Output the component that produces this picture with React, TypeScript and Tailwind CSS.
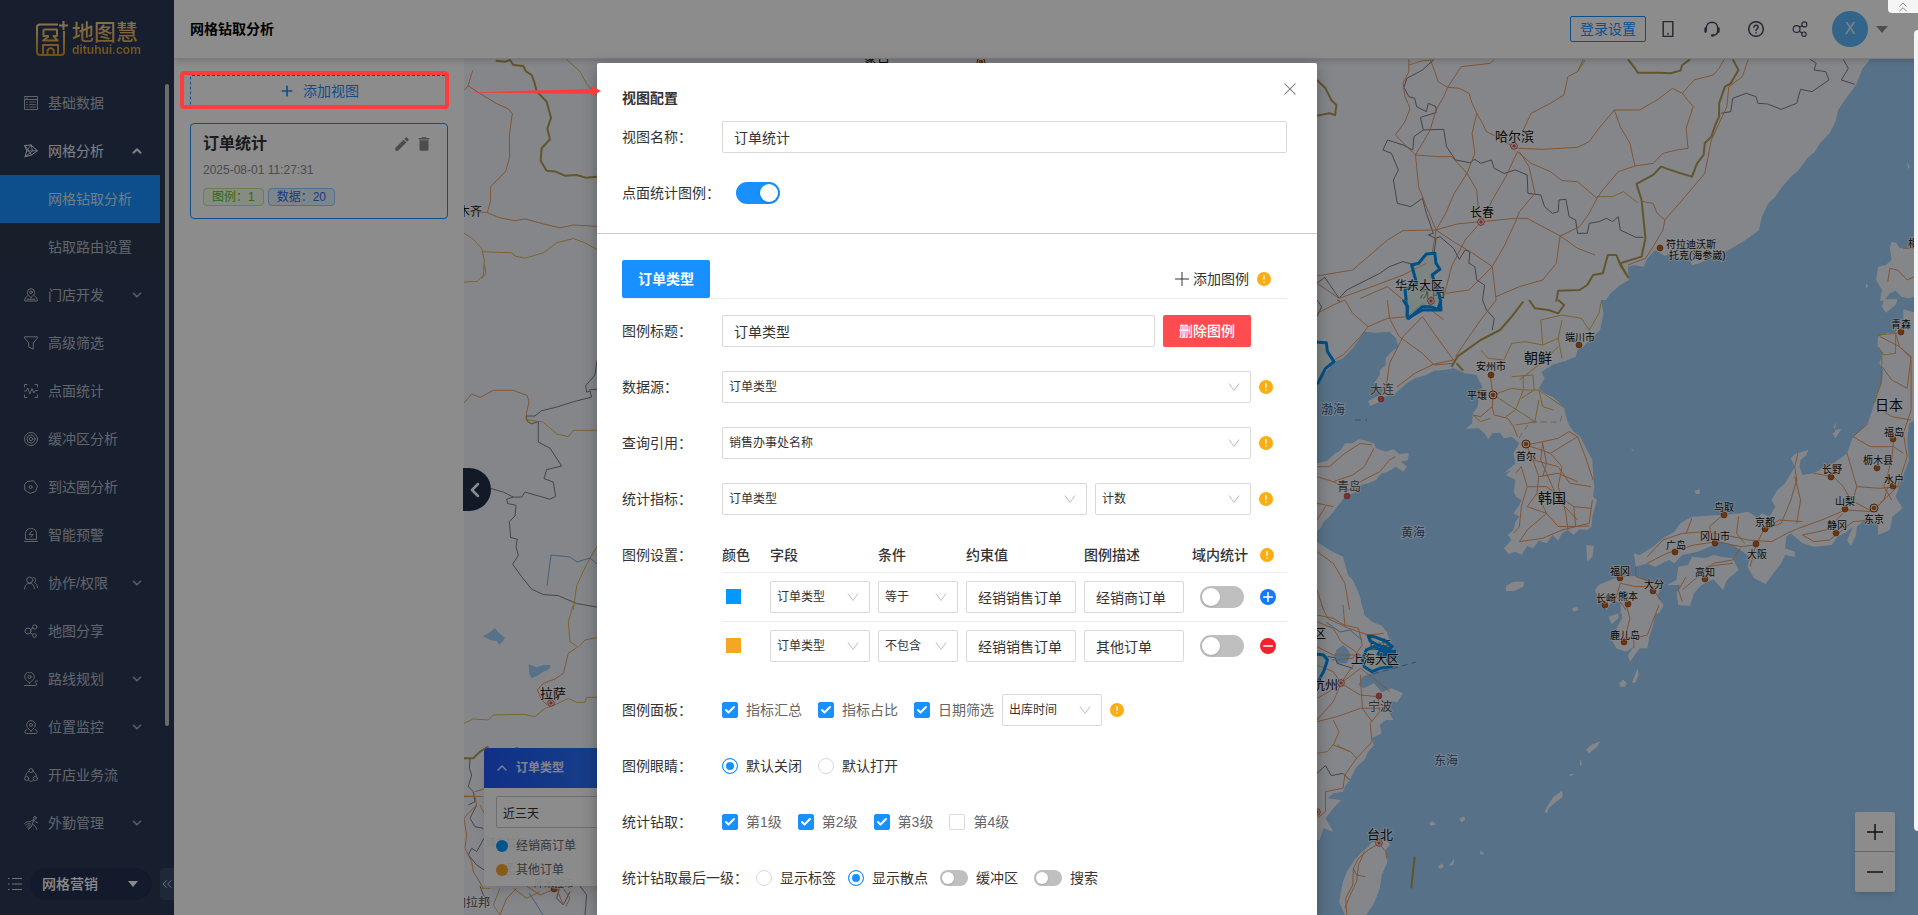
import type { ReactNode } from 'react';
import clsx from 'clsx';
import { Check, ChevronDown, ChevronLeft, ChevronUp, ChevronsLeft, ChevronsUp, Plus } from 'lucide-react';
import { MdDelete, MdEdit } from 'react-icons/md';

/* ---------- icons ---------- */

function Glyph({ children, className = 'size-3.5' }: { children: ReactNode; className?: string }) {
  return (
    <svg
      viewBox="0 0 14 14"
      className={clsx('shrink-0', className)}
      fill="none"
      stroke="currentColor"
      strokeWidth={1}
      strokeLinecap="round"
      strokeLinejoin="round"
      aria-hidden
    >
      {children}
    </svg>
  );
}

const icons: Record<string, ReactNode> = {
  data: (
    <>
      <path d="M.5.5h13v3H.5zM.5 3.5v10h13v-10" />
      <path d="M3 .5v3M2.5 6h1M5.5 6h6M2.5 8.5h1M5.5 8.5h6M2.5 11h1M5.5 11h6" strokeWidth=".8" />
    </>
  ),
  grid: (
    <>
      <path d="M1 1.5 7 1l6.3 5.7L7.5 11 1 12.8 2.7 7z" />
      <path d="M1 1.5 7.5 11M7 1 2.7 7l10.6-.3M7 1l1.5 6-7.5 5.8" strokeWidth=".8" />
    </>
  ),
  store: (
    <>
      <path d="M7 9.5C4.6 7.8 3.4 6.2 3.4 4.3a3.6 3.6 0 0 1 7.2 0c0 1.9-1.2 3.5-3.6 5.2z" />
      <circle cx="7" cy="4.3" r="1.3" />
      <path d="M3.7 7.8C1.7 8.8.7 10.5.7 13h12.6c0-2.5-1-4.2-3-5.2M3 11.2h8" />
    </>
  ),
  filter: <path d="M.8.8h12.4v1.500L9.3 7v6.2L4.7 11V7L.8 2.300z" />,
  stat: (
    <>
      <path d="M.5 3V.5H3M11 .5h2.5V3M13.5 11v2.5H11M3 13.5H.5V11" />
      <path d="M.5 7h1.7l1.5-3 2.2 6L8 4.5l1.7 4.5 1.5-2.5h2.3" />
    </>
  ),
  buffer: (
    <>
      <circle cx="7" cy="7" r="6.5" />
      <circle cx="7" cy="7" r="4" />
      <circle cx="7" cy="7" r="1.7" />
    </>
  ),
  reach: (
    <>
      <path d="M3.5 1.5 9.5.7l4 5.3-2 5.5L6 13.4.8 10 .6 5z" />
      <circle cx="6.6" cy="7" r="1.5" />
    </>
  ),
  alert: (
    <>
      <path d="M1.5 11V5.5a5 5 0 0 1 5-5h1a5 5 0 0 1 5 5V11zM.5 13.5h13" />
      <path d="M7.8 3.3 5 6.6h4L6.500 9.3" />
    </>
  ),
  team: (
    <>
      <circle cx="5.7" cy="4" r="3" />
      <path d="M.6 13c0-3.5 2-5.7 5.1-5.7s4.6 2.2 4.6 5.2M9.3 1.3a2.8 2.8 0 0 1 1 5.2c2 .8 3 2.7 3.2 5" />
    </>
  ),
  share: (
    <>
      <circle cx="4" cy="7" r="3" />
      <circle cx="10.8" cy="3" r="2.2" />
      <circle cx="10.5" cy="11.5" r="1.9" />
      <path d="m6.600 5.5 2.3-1.4M6.4 8.9l2.5 1.6" />
    </>
  ),
  route: (
    <>
      <path d="M5.5 11C2.3 8.5.7 6.7.7 4.900a4.6 4.6 0 0 1 9.6 0c0 1.8-1.5 3.6-4.8 6.1z" />
      <circle cx="5.5" cy="4.9" r="1.6" />
      <path d="M.5 13.5h10.7c2 0 2-2.2.5-2.6-1.5-.5-.7-2.3 1.8-2" />
    </>
  ),
  monitor: (
    <>
      <path d="M7 11C4 8.5 2.7 6.7 2.7 4.9a4.3 4.3 0 0 1 8.6 0c0 1.8-1.3 3.6-4.3 6.1z" />
      <circle cx="7" cy="4.9" r="1.5" />
      <path d="M3 9.5c-3 1-3.2 4 0 4h8c3.2 0 3-3 0-4" />
    </>
  ),
  flow: (
    <>
      <circle cx="7" cy="2.5" r="2" />
      <circle cx="2.7" cy="10.5" r="2.1" />
      <circle cx="11.3" cy="10.5" r="2.1" />
      <path d="M4.8 3.5C2.8 4.6 1.8 6 1.7 8M9.2 3.5c2 1.1 3 2.500 3.1 4.5M5 12.8c1.3.7 2.7.7 4 0" />
    </>
  ),
  field: (
    <>
      <circle cx="11" cy="1.8" r="1.3" />
      <path d="M6.5 5.5 9.5 3.5l2 2.5 2 .8M9.5 4 8.5 8l3 2.5 1.3 3M8.5 8 7 11l-2.5 2.3" />
      <path d="M.5 7.5C2 5.8 4 5.3 6 6M1.8 9C3 7.8 4.5 7.3 6.5 8M3 10.7c1-.9 2-1 3.2-.7M4.200 12.200l1.300-.4" />
    </>
  ),
};

function WarnIcon() {
  return (
    <svg viewBox="0 0 14 14" className="size-3.5 shrink-0" aria-label="提示">
      <circle cx="7" cy="7" r="7" fill="#faad14" />
      <path d="M7 3.3v4.5M7 9.5v1.2" stroke="#fff" strokeWidth="1.3" />
    </svg>
  );
}

function Logo() {
  return (
    <div className="flex items-end gap-1 bg-linear-to-b from-[#f3cf8a] to-[#dc9320] bg-clip-text pl-9 text-transparent">
      <svg viewBox="0 0 32 35" className="h-[35px] w-8" fill="none" stroke="url(#gold)" strokeWidth="2" strokeLinejoin="round">
        <defs>
          <linearGradient id="gold" x1="0" y1="0" x2="0" y2="35" gradientUnits="userSpaceOnUse">
            <stop stopColor="#f5d8a0" />
            <stop offset="1" stopColor="#d98c14" />
          </linearGradient>
        </defs>
        <path d="M22 3.5H4a3 3 0 0 0-3 3V31a3 3 0 0 0 3 3h21a3 3 0 0 0 3-3V10" />
        <path d="M27.5 0v9M23 4.5h9" />
        <path d="M7.500 8.500H21v6.500h-3.500l4 4.500h1M7.500 8.500V15H12v1l-5 3.500h15.500" />
        <path d="M7 33.500V24h15v9.500M11.500 33.5v-3a3.200 3.200 0 0 1 6.400 0v3" />
      </svg>
      <div className="flex flex-col">
        <span className="text-[22px] leading-[22px] font-medium">地图慧</span>
        <span className="font-['Inter',sans-serif] text-xs leading-3 font-semibold">dituhui.com</span>
      </div>
    </div>
  );
}

/* ---------- sidebar ---------- */

type NavItem = { icon?: string; label: string; arrow?: 'up' | 'down'; kind?: 'active' | 'sub' | 'open' };

const navItems: NavItem[] = [
  { icon: 'data', label: '基础数据' },
  { icon: 'grid', label: '网格分析', arrow: 'up', kind: 'open' },
  { label: '网格钻取分析', kind: 'active' },
  { label: '钻取路由设置', kind: 'sub' },
  { icon: 'store', label: '门店开发', arrow: 'down' },
  { icon: 'filter', label: '高级筛选' },
  { icon: 'stat', label: '点面统计' },
  { icon: 'buffer', label: '缓冲区分析' },
  { icon: 'reach', label: '到达圈分析' },
  { icon: 'alert', label: '智能预警' },
  { icon: 'team', label: '协作/权限', arrow: 'down' },
  { icon: 'share', label: '地图分享' },
  { icon: 'route', label: '路线规划', arrow: 'down' },
  { icon: 'monitor', label: '位置监控', arrow: 'down' },
  { icon: 'flow', label: '开店业务流' },
  { icon: 'field', label: '外勤管理', arrow: 'down' },
];

function Sidebar() {
  return (
    <aside className="flex w-[174px] shrink-0 flex-col bg-[#2b3a57] text-sm text-[#b4b8c1]">
      <div className="h-[79px] shrink-0 pt-[21px]">
        <Logo />
      </div>
      <div className="flex min-h-0 flex-1">
        <nav className="w-40 shrink-0">
          {navItems.map((item) => (
            <a
              key={item.label}
              href="#"
              className={clsx(
                'flex h-12 items-center pr-4 pl-6',
                item.kind === 'active' && 'bg-[#1890ff] text-[#cfe3f8]',
                item.kind === 'sub' && 'bg-[#2a3a4d]',
                item.kind === 'open' && 'text-[#e8eaee]',
              )}
            >
              {item.icon && <Glyph>{icons[item.icon]}</Glyph>}
              <span className={clsx('flex-1', item.icon ? 'ml-2.5' : 'ml-6')}>{item.label}</span>
              {item.arrow === 'up' && <ChevronUp className="size-3.5" strokeWidth={3.5} />}
              {item.arrow === 'down' && <ChevronDown className="size-3.5 text-[#9ea4b0]" strokeWidth={3} />}
            </a>
          ))}
        </nav>
        <div className="mt-[5px] ml-[5px] h-[642px] w-1 shrink-0 rounded-full bg-[#c6c6c6]" />
      </div>
      <div className="flex h-12 shrink-0 items-center justify-between pl-2 text-white">
        <button type="button" aria-label="菜单" className="text-[#d0d3d9]">
          <Glyph className="size-3.5">
            <path d="M0 1.5h1.5M4 1.5h10M0 7h1.500M4 7h10M0 12.5h1.5M4 12.5h10" strokeLinecap="butt" />
          </Glyph>
        </button>
        <button
          type="button"
          className="flex h-8 w-[122px] items-center justify-between rounded-full bg-[#223050] pr-3.5 pl-3 font-medium"
        >
          网格营销
          <svg viewBox="0 0 10 6" className="h-1.5 w-2.5" fill="#fff" aria-hidden>
            <path d="M0 0h10L5 6z" />
          </svg>
        </button>
        <button
          type="button"
          aria-label="收起菜单"
          className="flex h-8 w-3.5 items-center justify-center rounded-l-sm bg-[#3a4968] text-[#d0d3d9]"
        >
          <ChevronsLeft className="size-4 shrink-0" strokeWidth={1.5} />
        </button>
      </div>
      <div className="h-[7px] shrink-0" />
    </aside>
  );
}

/* ---------- header ---------- */

function Header() {
  return (
    <header className="z-10 flex h-[59px] shrink-0 items-start justify-between border-b border-[#e0e0e4] bg-white pl-4 shadow-md">
      <h1 className="text-sm leading-[58px] font-bold text-black">网格钻取分析</h1>
      <div className="flex h-[58px] items-center pr-[30px] text-[#4a4a63]">
        <button type="button" className="h-[26px] w-[76px] rounded-xs border border-[#1890ff] text-sm leading-6 text-[#1890ff]">
          登录设置
        </button>
        <button type="button" aria-label="手机版" className="ml-3.5">
          <Glyph className="size-4">
            <path d="M2.800.500h8.400v13H2.800zM7 11v.5" strokeWidth="1.3" />
          </Glyph>
        </button>
        <button type="button" aria-label="客服" className="ml-7">
          <Glyph className="size-4">
            <path d="M2 8.5V6a5 5 0 0 1 10 0v2.5c0 2-1.5 3.7-4 4" strokeWidth="1.3" />
            <path d="M1.3 6.5v3M12.7 6.5v3M7 12.7h1" strokeWidth="2" />
          </Glyph>
        </button>
        <button type="button" aria-label="帮助" className="ml-7">
          <Glyph className="size-4">
            <circle cx="7" cy="7" r="6.4" strokeWidth="1.3" />
            <path d="M5.2 5.5c0-2.5 3.7-2.3 3.7 0 0 1.3-1.9 1.5-1.9 2.8M7 10.3v.2" strokeWidth="1.3" />
          </Glyph>
        </button>
        <button type="button" aria-label="分享" className="ml-7">
          <Glyph className="size-4">{icons.share}</Glyph>
        </button>
        <button type="button" className="ml-6 size-9 rounded-full bg-[#5db6f9] text-base text-[#e6f4ff]">
          X
        </button>
        <svg viewBox="0 0 10 6" className="ml-2 h-[7px] w-3" fill="#8a8a90" aria-hidden>
          <path d="M0 0h10L5 6z" />
        </svg>
      </div>
    </header>
  );
}

/* ---------- view list ---------- */

function ViewList() {
  return (
    <section className="flex w-[290px] shrink-0 flex-col gap-4 bg-white px-4 pt-4">
      <button
        type="button"
        className="flex h-8 items-center justify-center gap-2 rounded-xs border border-dashed border-[#1890ff] text-sm text-[#1890ff]"
      >
        <Plus className="size-4" strokeWidth={2.5} />
        添加视图
      </button>
      <article className="flex h-24 flex-col rounded border border-[#1890ff] px-3 pt-2">
        <div className="flex items-center justify-between pr-0.5">
          <h2 className="text-base leading-6 font-bold text-[#333]">订单统计</h2>
          <div className="flex gap-1 text-[#8a8a8a]">
            <button type="button" aria-label="编辑">
              <MdEdit className="size-[18px]" />
            </button>
            <button type="button" aria-label="删除">
              <MdDelete className="size-[18px]" />
            </button>
          </div>
        </div>
        <time className="mt-1 text-xs leading-5 text-[#8a8a8a]">2025-08-01 11:27:31</time>
        <div className="mt-2 flex gap-1 text-xs leading-4">
          <span className="rounded-sm border border-[#b7eb8f] bg-[#f6ffed] px-2 text-[#52c41a]">图例：1</span>
          <span className="rounded-sm border border-[#91caff] bg-[#e6f4ff] px-2 text-[#2f6bea]">数据：20</span>
        </div>
      </article>
    </section>
  );
}

/* ---------- map ---------- */

// Each sheet is drawn in its own grid and scaled onto the canvas.
const sheets = {
  ne: 'translate(1310 0) scale(.3878 .3333)',
  e: 'translate(1310 300) scale(.3878 .3333)',
  se: 'translate(1310 605) scale(.3878 .3333)',
  w: 'translate(440 50) scale(.3333 .3571)',
  sw: 'translate(460 605) scale(.3333)',
};

type Sheet = keyof typeof sheets;
type Layer = { sheet: Sheet; d: string };

const sea: Layer[] = [
  {
    sheet: 'ne',
    d: 'M1445 177 1425 205 1408 255 1385 290 1362 330 1355 365 1340 400 1315 430 1302 455 1282 475 1260 510 1240 530 1218 560 1200 590 1182 610 1165 650 1158 690 1135 710 1118 724 1080 750 1040 770 1000 792 985 795 975 765 960 775 945 778 930 760 915 768 890 750 870 775 860 800 835 795 820 800 822 840 800 855 775 880 762 902H1580V177Z',
  },
  { sheet: 'e', d: 'M-20 0H1580V930H-20Z' },
  { sheet: 'se', d: 'M-20 0H1580V940H-20Z' },
  { sheet: 'sw', d: 'M68 93 85 85 98 75 105 68 113 80 135 98 128 110 118 119 110 108 90 105ZM206 178 230 187 250 180 272 180 268 192 250 200 232 212 215 220 208 208Z' },
];

const land: Layer[] = [
  {
    sheet: 'e',
    d: 'M-20 -2H750L757 40 748 90 735 105 720 120 705 140 690 150 685 170 660 182 650 185 625 195 597 215 605 235 590 265 605 280 625 290 640 305 655 322 660 350 668 375 680 395 697 410 710 440 728 480 730 520 733 560 730 590 740 600 728 650 726 680 715 690 695 688 680 705 665 690 650 700 640 722 625 705 610 730 590 722 575 745 560 738 545 765 530 755 512 762 500 745 520 720 510 705 525 690 530 665 540 650 525 640 540 615 545 600 532 590 525 575 530 540 505 525 520 510 500 520 530 490 525 460 540 430 520 410 500 415 490 398 470 400 460 418 450 400 435 385 402 386 418 370 420 340 432 322 435 300 432 280 445 262 435 240 430 225 400 220 370 205 345 210 320 212 300 225 270 235 250 250 235 265 215 285 190 290 180 305 155 318 150 303 180 285 190 270 165 250 180 225 180 210 195 195 195 175 210 155 228 140 222 115 205 95 170 98 140 95 125 120 110 145 85 175 62 185 42 215 18 250-20 260Z',
  },
  {
    sheet: 'e',
    d: 'M-20 490H20L45 482 60 465 80 450 90 430 110 430 125 418 145 422 165 430 170 445 195 455 215 448 230 462 255 460 252 480 235 485 250 500 240 515 222 500 200 515 185 520 170 540 150 550 130 555 118 575 90 590 80 605 50 650 35 665 30 680 18 695-20 700Z',
  },
  { sheet: 'e', d: 'M-20 720 18 725 50 750 85 770 92 800 98 825 110 840 122 870 130 895 135 930H-20Z' },
  {
    sheet: 'se',
    d: 'M-20-2H132L138 15 140 30 160 50 185 62 198 80 205 105 222 150 205 190 165 200 135 215 125 240 145 245 165 235 185 262 210 250 240 265 225 292 195 285 210 300 205 325 215 345 195 345 180 360 185 385 160 400 165 420 150 440 140 465 120 485 105 520 90 545 85 560 60 565 45 580 80 585 60 610 40 640 60 680 35 670 25 705-20 710Z',
  },
  {
    sheet: 'se',
    d: 'M150 725 160 712 195 705 207 718 195 735 200 770 185 810 180 850 165 895 145 930 90 930 75 890 85 830 95 800 115 765 130 745Z',
  },
  {
    sheet: 'e',
    d: 'M1580 45 1530 60 1515 80 1510 100 1490 98 1465 110 1463 140 1478 160 1468 190 1478 210 1475 250 1460 290 1450 330 1440 365 1425 385 1400 410 1385 460 1350 490 1320 505 1300 520 1270 525 1262 500 1265 480 1280 465 1285 450 1250 462 1240 475 1250 500 1235 530 1225 550 1205 570 1190 600 1200 620 1185 650 1165 640 1155 655 1130 635 1110 640 1060 645 985 650 955 670 940 695 910 715 885 740 850 765 835 760 840 800 870 790 890 800 925 780 940 790 960 765 1000 755 1030 740 1060 725 1090 735 1110 750 1135 770 1128 800 1145 835 1175 852 1195 820 1215 790 1225 765 1250 770 1250 755 1225 745 1228 710 1240 700 1270 730 1300 740 1345 735 1360 710 1385 695 1400 680 1385 720 1395 738 1408 705 1410 680 1430 660 1440 650 1465 670 1465 705 1495 690 1502 650 1528 625 1510 590 1525 540 1545 480 1540 420 1545 370 1580 350Z',
  },
  { sheet: 'e', d: 'M950 800 975 795 985 770 1020 775 1040 765 1060 770 1090 775 1105 810 1075 840 1065 870 1040 838 1010 855 990 880 980 918 950 915 945 880 955 855 920 855 945 840Z' },
  { sheet: 'e', d: 'M745 855 775 840 800 830 840 828 870 845 905 860 895 890 912 915 900 940H800L805 910 780 900 765 930 745 900 735 870Z' },
  { sheet: 'se', d: 'M800-2H905L890 30 885 60 875 95 870 130 850 130 825 170 820 150 835 125 815 140 790 130 778 105 800 95 790 70 805 40Z' },
  { sheet: 'e', d: 'M1475 20 1480-2H1515L1510 15 1485 38ZM1530 28 1580 45V70L1530 60Z' },
  {
    sheet: 'ne',
    d: 'M1500 725 1512 728 1520 745 1580 740V880L1545 895 1525 890 1510 872 1495 880 1480 902H1470L1475 870 1460 840 1465 800 1485 795 1500 780 1495 745ZM1540 485 1546 500 1542 508ZM1435 850 1440 860 1432 865Z',
  },
  { sheet: 'e', d: 'M505 858 525 845 552 845 550 860 525 874 505 872ZM712 735 732 738 728 770 715 785ZM992 572 1005 568 1005 582 995 582ZM1357 367 1352 390 1370 388 1355 415 1347 400 1355 395 1350 380ZM830 447 834 452 829 452Z' },
  {
    sheet: 'se',
    d: 'M797 235 808 224 817 235 812 245H800ZM845 190 847 210 838 235 830 232 838 210ZM712 435 725 420 750 408 740 425 720 445ZM696 462 702 478 696 484ZM650 557 652 575 635 590 615 610 612 625 605 620 615 598 628 575ZM668 508 682 506 672 514ZM385 640 398 635 400 645 390 652ZM307 655 315 648 325 658 312 662ZM330 785 340 775 345 785 335 792ZM372 762 370 780 358 782ZM440 735 450 748 438 748ZM675 10 690 5 692 15 680 20ZM770 35 795 25 795 40 778 58Z',
  },
];

const lakes: Layer[] = [
  { sheet: 'se', d: 'M68 135 85 120 95 130 105 150 95 175 70 175 62 155ZM125 240 145 222 165 232 140 250Z' },
];

const highways: Layer[] = [
  { sheet: 'ne', d: 'M310 178 322 215 330 245 355 262 345 290 325 330 310 390 290 430 272 465' },
  { sheet: 'ne', d: 'M475 178 465 190 390 200 355 262 385 265 410 280 418 310 430 340 445 370 455 395 478 408 500 425 535 445' },
  { sheet: 'ne', d: 'M430 340 418 400 425 460 405 520 372 580 350 640 325 690' },
  { sheet: 'ne', d: 'M255 178 255 215 240 250 245 290 258 325 245 365 220 405 250 440 272 465 275 500 280 560 300 620 325 690' },
  { sheet: 'ne', d: 'M272 465 330 470 365 470 405 520 430 570 435 640 442 665' },
  { sheet: 'ne', d: 'M535 445 600 448 690 442 720 425 745 385 785 330 850 330 895 300 935 265 960 280 990 240 1040 225 1055 205 1068 178' },
  { sheet: 'ne', d: 'M785 330 800 380 825 430 838 498 795 515 755 570 740 595 720 640 695 680 645 708 560 655 530 655 442 665' },
  { sheet: 'ne', d: 'M838 498 885 490 910 460 945 450 975 445 970 385 988 320 960 280' },
  { sheet: 'ne', d: 'M535 455 570 490 620 515 650 542 690 545 740 595M535 455 505 530 470 600 442 665M540 455 565 500 580 580 540 635 530 665 500 740 470 800' },
  { sheet: 'ne', d: 'M550 390 570 340 620 310 655 285 665 230 690 215 705 178' },
  { sheet: 'ne', d: 'M325 690 380 672 442 665 400 720 365 800 345 890M325 690 240 692 200 720 150 770 110 810 18 828M325 690 370 725 420 760 470 800 480 900' },
  { sheet: 'ne', d: 'M645 708 690 745 735 765M645 708 635 790 600 840 540 860 480 890M325 690 315 760' },
  { sheet: 'ne', d: 'M1130 178 1115 230 1080 260 1075 320 1035 420 1018 520 960 600 915 660 910 690 885 740 865 775 820 795M858 605 885 610 895 640 915 660' },
  { sheet: 'ne', d: 'M18 850 75 895 160 860 240 825 300 790M240 900 200 860 130 895M350 880 410 870 470 800' },
  { sheet: 'ne', d: 'M1558 745 1530 745M1558 830 1540 840 1515 810 1495 805 1490 845' },
  { sheet: 'e', d: 'M18 40 60 15 90 0 110 40 150 80 130 110 85 165 65 178M150 80 200 55 250 50 290 10 345 60M200 0 205 55 230 110 290 160 320 195 370 190M290 50 240 110 205 190 198 250 195 285' },
  { sheet: 'e', d: 'M290 50 320 100 370 180 320 192 270 220 225 260M480 0 440 60 410 110 375 170' },
  { sheet: 'e', d: 'M18 500 50 500 90 460 130 430 160 435M18 530 60 545 110 525 140 500 165 445M60 545 100 570 130 545 180 515 205 480 220 470M18 610 60 620M18 660 40 620' },
  { sheet: 'e', d: 'M465 230 472 285 470 320 475 345 510 355 525 380 535 410M470 320 440 350 420 345' },
  { sheet: 'e', d: 'M558 435 600 425 640 415 668 395 690 410M558 435 575 480 590 530 585 580 610 640 640 680 720 678M558 435 620 460 690 410M575 480 640 500 670 550 725 560M590 530 640 520 690 545M545 500 560 560 545 620 540 680 525 700M545 500 530 520M560 560 610 560 680 620 725 625M600 425 595 480 640 600 690 660M620 460 650 500 640 560 660 640 665 690M585 580 560 620 610 640 560 690 540 725 600 715 650 690 720 670 728 600M690 410 710 470 730 540M680 620 685 680M600 430 610 490 600 530' },
  { sheet: 'e', d: 'M18 755 60 790 90 850 102 930M18 870 35 930' },
  { sheet: 'e', d: 'M870 770 910 720 960 700 1020 695 1070 705 1130 720 1190 725 1230 700 1260 685 1320 660 1380 630 1450 635 1480 600 1490 560M870 790 920 760 990 735 1050 725 1110 740 1150 735M985 655 970 700M1060 650 1030 680 1040 730M1105 650 1100 700 1120 730M1150 735 1170 690 1210 660 1270 665M1150 735 1135 800M1170 690 1215 670 1240 600 1255 540 1250 500 1258 460' },
  { sheet: 'e', d: 'M1300 520 1350 530 1375 560 1395 600 1450 635M1385 460 1395 500 1410 560 1400 600M1400 410 1445 440 1505 440 1530 460M1410 560 1470 565 1520 560M1375 640 1330 690 1270 705 1300 725 1340 720 1400 665 1450 660M1505 420 1500 480 1480 560 1500 600M1475 200 1500 240 1540 265 1550 170 1520 140 1470 110M1510 100 1520 140 1550 175M1460 320 1500 350 1550 360M1550 180 1550 330 1530 400 1540 470 1515 560 1470 610M1440 370 1400 410M1250 530 1265 600 1255 670' },
  { sheet: 'e', d: 'M800 850 840 860 900 860M800 850 790 890 815 930M840 800 840 830 890 850M960 870 1000 830 1040 790 1090 780 1110 745M1020 800 1090 790M960 905 950 870 970 830M885 870 905 900' },
  { sheet: 'se', d: 'M815 0 825 40 810 110M900 0 885 45 870 90 835 100 835 130' },
  { sheet: 'se', d: 'M30 0 45 40 100 70 150 90 190 85M18 50 60 70 80 110 130 150 100 200 80 235 60 290 18 345M85 0 90 60 125 70 135 120 110 160 55 165M80 235 130 190 175 230 205 260M18 125 60 150 130 150M80 235 130 270 175 275 180 320 155 355 160 410 120 460 90 510 85 550 40 560 40 620 18 640M130 210 135 310 160 350M18 350 70 335 130 310 180 310M60 345 75 380 60 420 105 440 120 460M18 280 80 240M18 180 60 200 80 235M18 30 60 40 90 62' },
  { sheet: 'se', d: 'M178 715 150 735 125 760 112 790 110 840 92 880 95 930M178 715 195 740 198 760M112 790 120 810 142 815M140 740 125 780 120 830 100 880 90 910' },
  { sheet: 'w', d: 'M98 57 92 75 84 100 72 113M84 100 120 122 170 150 205 165 217 178 208 240 209 300 197 340 152 383 151 425 142 455M72 452 140 455 180 470 225 478 255 473 310 487 360 498 400 490 471 494' },
  { sheet: 'w', d: 'M72 987 85 975 95 963 120 973 160 953 220 953 262 968 267 985 260 1015 258 1035' },
  { sheet: 'sw', d: 'M232 255 250 235 285 222 310 205 325 145 350 128M232 255 245 285 262 300' },
  { sheet: 'sw', d: 'M12 575 45 575 50 600 25 625 12 640 20 690 15 730 35 770 40 800 70 850M45 560 72 552M200 843 240 870 290 850 310 900M310 850 330 880 318 905M120 930 140 880 170 850' },
];

const roads: Layer[] = [
  { sheet: 'ne', d: 'M740 590 780 590 808 575 845 608M255 195 290 182 320 180M690 215 710 180' },
  { sheet: 'e', d: 'M440 150 460 175 500 180 520 130 555 125 600 135 595 60 650 45 700 55 720 90 745 40 752 0M600 135 640 115 650 60M640 115 650 175M472 285 520 265 550 270 590 270 620 295 655 322M550 225 550 270 530 330 505 350M520 230 575 225 578 270 545 295M480 290 520 320 580 365 590 300M590 270 600 320 628 330M540 240 595 190 640 140M420 345 440 365 465 355' },
  { sheet: 'e', d: 'M1463 105 1515 100M1465 140 1480 165 1510 160 1510 105M1475 170 1472 250 1455 310M530 375 585 365' },
  { sheet: 'se', d: 'M18 445 45 440 60 418M100 440 70 420' },
  { sheet: 'w', d: 'M378 25 420 60 440 95 471 128M72 513 100 530 125 555 133 590 130 630 112 648 72 650M130 565 215 568 225 577 255 583 310 568 350 540 400 528 435 540 471 558M133 600 138 625 125 640' },
  { sheet: 'w', d: 'M258 1035 310 1042 350 1075 385 1083 400 1065 471 1065M471 1390 440 1440 410 1500 400 1568' },
  { sheet: 'sw', d: 'M340 0 325 50 330 110 355 127 375 105 411 98M12 355 40 342 85 345 100 330 190 328 225 335 255 310 290 297 325 280 350 292 375 292 380 277 411 277' },
  { sheet: 'sw', d: 'M12 573 70 575M60 600 80 640M120 850 100 900 120 930M160 850 200 880 240 860M60 850 90 850' },
];

const provinces: Layer[] = [
  {
    sheet: 'ne',
    d: 'M320 178 290 210 250 235 242 262 255 290 270 295 275 320 300 335 305 310 325 320 325 338 285 352 292 390 345 388 352 440 375 480 412 488 425 478 440 490 468 480 475 505 500 520 530 510 560 525 562 580 595 585 605 620 625 640 640 635 642 600 660 598 668 650 685 660 690 700 715 700 720 670 745 665 765 655 780 665 795 650 800 690 840 712 860 712',
  },
  { sheet: 'ne', d: 'M292 390 268 410 265 450 240 435 200 420 188 450 210 460 228 510 215 540 225 610 260 620 290 595 300 640 318 700 305 705 325 715 335 710 370 745 385 778 400 750 412 755 410 790 425 800 430 840 450 855 445 900M18 850 38 832 75 895 95 870 180 820 205 800 240 785 270 795M325 715 320 760' },
  { sheet: 'ne', d: 'M1060 340 1085 335 1090 295 1125 280 1150 290 1155 310 1180 312 1215 328 1255 310 1265 268 1295 275 1338 240 1330 215 1300 210 1305 190 1290 178M1375 178 1388 205 1370 240 1405 253' },
  { sheet: 'e', d: 'M445 0 455 30 475 55 470 90M18 50 30 20 18 0M70 0 78 5' },
  { sheet: 'se', d: 'M18 505 40 482 55 512 85 505 102 525M45 155 65 158 70 175 110 190' },
  { sheet: 'w', d: 'M471 870 465 910 437 940 440 958 450 955 455 972 400 985 350 1000 305 1010 285 1025 258 1025 262 1040 275 1047 295 1040 295 1098 330 1115 365 1165 320 1175 312 1200 340 1210 347 1250 330 1258 255 1238 245 1252 220 1252 190 1238 153 1228M471 950 448 952' },
  { sheet: 'w', d: 'M220 1252 200 1258 203 1270 228 1275 225 1305 208 1320 212 1365 232 1370 228 1390 235 1415 218 1440 245 1475 275 1510 310 1525 355 1528 410 1550 471 1560' },
  { sheet: 'sw', d: 'M30 460 28 490 35 510 25 545 40 560 45 590 25 600M50 600 30 640 45 665 70 670M72 700 50 740 35 730 25 750 50 780 80 800M60 843 70 870 90 890M360 843 380 870 375 930M300 843 290 880 310 900 330 860' },
];

const borders: Layer[] = [
  { sheet: 'ne', d: 'M18 240 40 265 55 300 68 315 65 345 50 340 18 347M820 178 838 205 845 218 900 218 930 220 955 212 960 195 980 178M1090 178 1105 210 1085 250 1070 260 1055 310 1055 350 1045 375 1035 410 1018 430 1015 465 998 490 985 530 950 518 905 500 885 525 842 552 855 600 862 680 865 715 855 770 800 790 820 832 800 795 790 765 768 765 755 820 730 825 715 855 695 870 640 872 635 905' },
  { sheet: 'e', d: 'M365 200 380 170 440 120 490 90 520 50 550 5M565 0 580 25 615 30 640 40 655 15 640 0M378 190 395 212' },
  { sheet: 'se', d: 'M270 755 261 850' },
  { sheet: 'w', d: 'M167 30 195 33 210 28 220 42 250 45 258 60 275 70 283 90 290 115 320 145 333 190 322 220 330 250 305 275 302 310 320 338 345 340 375 352 410 350 440 358 471 355' },
  { sheet: 'sw', d: 'M12 460 40 460 60 440 85 425M165 430 175 430' },
];

const regions: Layer[] = [
  { sheet: 'ne', d: 'M300 762 322 760 325 790 335 808 315 825 322 850 335 890 338 930H290L252 955 250 920 245 870 275 850 262 795 280 790Z' },
  { sheet: 'e', d: 'M240 0 252 20 250 45 255 55 290 20 310 20 330 28 338 0' },
  { sheet: 'e', d: 'M0 125 42 128 45 155 62 185 40 205 20 250 0 250Z' },
  { sheet: 'se', d: 'M150 92 165 95 195 108 212 125 205 132 175 120 155 108ZM145 135 165 125 190 140 215 145 200 165 210 185 180 190 160 200 140 185 135 165ZM0 145 35 150 45 165 35 200 20 230 0 230Z' },
];

function Paths({ layers, className }: { layers: Layer[]; className: string }) {
  return (
    <g className={className} strokeLinejoin="round">
      {layers.map((layer) => (
        <path key={layer.sheet + layer.d} d={layer.d} transform={sheets[layer.sheet]} vectorEffect="non-scaling-stroke" />
      ))}
    </g>
  );
}

type Place = [text: string, x: number, y: number, size: number, tone?: 'sea' | 'soft'];

// Labels that sit under the highlighted regions.
const coveredPlaces: Place[] = [
  ['沈阳', 1419, 297, 13, 'soft'],
  ['上海', 1365, 649, 13, 'soft'],
];

const places: Place[] = [
  ['蒙古', 864, 62, 13],
  ['木齐', 458, 216, 12],
  ['拉萨', 540, 698, 13],
  ['加拉邦', 454, 907, 12, 'soft'],
  ['博格拉市', 486, 846, 10, 'soft'],
  ['孟', 503, 874, 14, 'soft'],
  ['库米拉市', 534, 887, 10, 'soft'],
  ['哈尔滨', 1495, 141, 13],
  ['长春', 1470, 217, 12],
  ['符拉迪沃斯', 1666, 248, 10],
  ['托克(海参崴)', 1669, 259, 10],
  ['华东大区', 1395, 290, 12],
  ['相', 1908, 247, 10],
  ['端川市', 1565, 341, 10],
  ['朝鲜', 1524, 363, 14],
  ['安州市', 1476, 370, 10],
  ['平壤', 1467, 399, 10],
  ['大连', 1370, 394, 12, 'soft'],
  ['渤海', 1321, 414, 12, 'sea'],
  ['首尔', 1516, 460, 10],
  ['韩国', 1538, 503, 14],
  ['青岛', 1337, 491, 12, 'soft'],
  ['黄海', 1401, 537, 12, 'sea'],
  ['青森', 1891, 328, 10],
  ['日本', 1875, 410, 14],
  ['福岛', 1884, 436, 10],
  ['枥木县', 1863, 464, 10],
  ['长野', 1822, 473, 10],
  ['水户', 1884, 483, 10],
  ['山梨', 1835, 505, 10],
  ['东京', 1864, 523, 10],
  ['静冈', 1827, 529, 10],
  ['京都', 1755, 526, 10],
  ['鸟取', 1714, 511, 10],
  ['冈山市', 1700, 540, 10],
  ['大阪', 1747, 558, 10],
  ['广岛', 1666, 549, 10],
  ['福冈', 1610, 575, 10],
  ['高知', 1695, 576, 10],
  ['大分', 1644, 588, 10],
  ['长崎', 1596, 602, 10],
  ['熊本', 1618, 600, 10],
  ['鹿儿岛', 1610, 639, 10],
  ['上海大区', 1351, 664, 12],
  ['大区', 1302, 638, 12],
  ['杭州', 1312, 689, 13],
  ['宁波', 1368, 711, 12, 'soft'],
  ['东海', 1434, 765, 12, 'sea'],
  ['台北', 1367, 839, 13],
];

const towns = [
  [1660, 248], [1579, 345], [1491, 375], [1901, 332], [1893, 439], [1877, 468], [1831, 477], [1893, 486],
  [1845, 509], [1836, 533], [1765, 529], [1724, 515], [1715, 543], [1756, 544], [1675, 552], [1620, 578],
  [1705, 579], [1653, 591], [1605, 605], [1628, 604], [1624, 642], [554, 889],
];
const ports = [[1381, 399], [1347, 496], [1379, 696]];
const capitals = [[1493, 395], [1526, 444], [1874, 508], [981, 62]];
const provincialSeats = [[1514, 146], [1481, 222], [1431, 301], [1341, 683], [1379, 843], [551, 703], [1317, 812]];

function PlaceLabels({ items }: { items: Place[] }) {
  return items.map(([text, x, y, size, tone]) => (
    <text
      key={`${text}-${x}`}
      x={x}
      y={y}
      fontSize={size}
      paintOrder="stroke"
      className={clsx(
        'stroke-white/60 stroke-2',
        tone === 'sea' ? 'fill-[#36598f]' : tone === 'soft' ? 'fill-[#555]' : 'fill-[#111]',
      )}
    >
      {text}
    </text>
  ));
}

function MapCanvas() {
  return (
    <svg viewBox="464 59 1454 856" preserveAspectRatio="xMaxYMin slice" className="size-full bg-[#f3f5fc]" role="img" aria-label="地图">
      <Paths layers={sea} className="fill-[#9ecff7]" />
      <Paths layers={land} className="fill-[#f3f5fc]" />
      <Paths layers={lakes} className="fill-[#9ecff7]" />
      <Paths layers={provinces} className="fill-none stroke-[#7c7c86] stroke-1" />
      <Paths layers={roads} className="fill-none stroke-[#dfb552] stroke-1" />
      <Paths layers={highways} className="fill-none stroke-[#e99b62] stroke-1" />
      <Paths layers={borders} className="fill-none stroke-[#b09c50] stroke-2" />
      <g className="fill-none stroke-[#7cb0dc]">
        <path d="M547 586 551 555 570 557 577 562 590 558 597 564M529 893 535 902 543 915M1326 622 1340 632 1350 630 1362 640" />
      </g>
      <g className="fill-none stroke-[#85859a]" strokeDasharray="6 4">
        <path d="M1373 674 1416 662M1355 420H1367" />
        <path d="M1519 438 1530 422H1560L1563 412" className="stroke-[#d3a9b5]" />
      </g>
      <PlaceLabels items={coveredPlaces} />
      <Paths layers={regions} className="fill-[#c8f0dc]/40 stroke-[#0091f5] stroke-[3]" />
      <path d="M1380 648 1396 650 1395 660 1376 655Z" fill="#0091f5" />

      {towns.map(([x, y]) => (
        <circle key={`${x}-${y}`} cx={x} cy={y} r="3" fill="#c3621f" stroke="#7d3c0e" strokeWidth=".6" />
      ))}
      {ports.map(([x, y]) => (
        <circle key={`${x}-${y}`} cx={x} cy={y} r="3" fill="#d6605a" stroke="#b04040" strokeWidth=".6" />
      ))}
      {capitals.map(([x, y]) => (
        <g key={`${x}-${y}`}>
          <circle cx={x} cy={y} r="4" fill="#fbe9dc" stroke="#7d3c0e" />
          <circle cx={x} cy={y} r="2.3" fill="#c3621f" />
        </g>
      ))}
      {provincialSeats.map(([x, y]) => (
        <g key={`${x}-${y}`}>
          <circle cx={x} cy={y} r="3.3" fill="#fff" stroke="#d0504c" />
          <rect x={x - 1.5} y={y - 1.5} width="3" height="3" fill="#d0504c" />
        </g>
      ))}
      <PlaceLabels items={places} />
    </svg>
  );
}

function LegendPanel() {
  return (
    <div className="absolute top-[689px] left-5 w-60 overflow-hidden rounded-sm bg-white/90 text-xs shadow-lg">
      <div className="flex h-10 items-center gap-1.5 bg-linear-to-r from-[#1f57f5] to-[#3b8cff] pl-2.5 font-bold text-white/90">
        <ChevronUp className="size-4" strokeWidth={2} />
        订单类型
      </div>
      <div className="px-3 pt-2 pb-1">
        <input
          aria-label="时间范围"
          defaultValue="近三天"
          className="h-8 w-full rounded-xs border border-[#c8c8c8] bg-white px-1.5 text-[#333]"
        />
        <ul className="mt-1.5 leading-6 text-[#666]">
          <li className="flex items-center gap-2">
            <span className="size-3 rounded-full bg-[#0099ff]" />
            经销商订单
          </li>
          <li className="flex items-center gap-2">
            <span className="size-3 rounded-full bg-[#f5a623]" />
            其他订单
          </li>
        </ul>
      </div>
    </div>
  );
}

/* ---------- form controls ---------- */

type FieldProps = { label: string; value: string; className: string };

function Select({ label, value, className }: FieldProps) {
  return (
    <span className={clsx('relative block shrink-0', className)}>
      <select
        aria-label={label}
        className="block h-8 w-full appearance-none rounded-xs border border-[#d9d9d9] bg-white pl-1.5 text-xs text-[#333]"
      >
        <option>{value}</option>
      </select>
      <svg
        viewBox="0 0 12 12"
        className="pointer-events-none absolute top-2.5 right-[11px] size-3 text-[#bfbfbf]"
        fill="none"
        stroke="currentColor"
        aria-hidden
      >
        <path d="M1 2.5 6 9.5l5-7" />
      </svg>
    </span>
  );
}

function TextInput({ label, value, className }: FieldProps) {
  return (
    <input
      aria-label={label}
      defaultValue={value}
      className={clsx('h-8 rounded-xs border border-[#d9d9d9] bg-white px-[11px] text-sm text-[#333]', className)}
    />
  );
}

function Switch({ label, on, small }: { label: string; on?: boolean; small?: boolean }) {
  return (
    <button
      type="button"
      role="switch"
      aria-checked={!!on}
      aria-label={label}
      className={clsx(
        'flex shrink-0 items-center rounded-full p-0.5',
        small ? 'h-4 w-7' : 'h-[22px] w-11',
        on ? 'justify-end bg-[#1890ff]' : 'bg-[#bfbfbf]',
      )}
    >
      <span className={clsx('rounded-full bg-white shadow-sm', small ? 'size-3' : 'size-[18px]')} />
    </button>
  );
}

function CheckOption({ label, checked }: { label: string; checked?: boolean }) {
  return (
    <label className="flex items-center gap-2 text-[#666]">
      <span className="relative flex size-4">
        <input
          type="checkbox"
          defaultChecked={checked}
          className="size-4 appearance-none rounded-xs border border-[#d9d9d9] bg-white checked:border-[#1890ff] checked:bg-[#1890ff]"
        />
        {checked && <Check className="pointer-events-none absolute inset-0.5 size-3 text-white" strokeWidth={4} />}
      </span>
      {label}
    </label>
  );
}

function RadioOption({ name, label, checked }: { name: string; label: string; checked?: boolean }) {
  return (
    <label className="flex items-center gap-2 text-[#333]">
      <input
        type="radio"
        name={name}
        defaultChecked={checked}
        className="size-4 appearance-none rounded-full border border-[#d9d9d9] bg-white checked:border-[#1890ff] checked:bg-[#1890ff] checked:shadow-[inset_0_0_0_3px_#fff]"
      />
      {label}
    </label>
  );
}

function FormRow({ label, children, wide }: { label: string; children: ReactNode; wide?: boolean }) {
  return (
    <div className="flex h-8 items-center">
      <span className={clsx('shrink-0', !wide && 'w-[100px]')}>{label}：</span>
      {children}
    </div>
  );
}

/* ---------- modal ---------- */

const legendRows = [
  { swatch: 'bg-[#0099ff]', condition: '等于', value: '经销销售订单', note: '经销商订单', action: 'add' },
  { swatch: 'bg-[#f5a623]', condition: '不包含', value: '经销销售订单', note: '其他订单', action: 'remove' },
];

function LegendTable() {
  return (
    <table className="w-full table-fixed border-collapse">
      <thead>
        <tr className="h-[33px] border-b border-[#ededed] text-left">
          <th className="w-12 font-medium">颜色</th>
          <th className="w-[108px] font-medium">字段</th>
          <th className="w-[88px] font-medium">条件</th>
          <th className="w-[118px] font-medium">约束值</th>
          <th className="w-[108px] font-medium">图例描述</th>
          <th className="w-[68px] font-medium">域内统计</th>
          <th>
            <WarnIcon />
          </th>
        </tr>
      </thead>
      <tbody>
        {legendRows.map((row) => (
          <tr key={row.note} className="h-[49px] border-b border-[#ededed] last:border-0">
            <td>
              <span className={clsx('ml-1 block size-[15px]', row.swatch)} />
            </td>
            <td>
              <Select label="字段" value="订单类型" className="w-[100px]" />
            </td>
            <td>
              <Select label="条件" value={row.condition} className="w-20" />
            </td>
            <td>
              <TextInput label="约束值" value={row.value} className="w-[110px]" />
            </td>
            <td>
              <TextInput label="图例描述" value={row.note} className="w-[100px]" />
            </td>
            <td>
              <div className="pl-2">
                <Switch label="域内统计" />
              </div>
            </td>
            <td>
              <button
                type="button"
                aria-label={row.action === 'add' ? '新增' : '移除'}
                className={clsx(
                  'flex size-4 items-center justify-center rounded-full text-white',
                  row.action === 'add' ? 'bg-[#1677ff]' : 'bg-[#f5222d]',
                )}
              >
                <Glyph className="size-2.5">
                  <path d={row.action === 'add' ? 'M7 1v12M1 7h12' : 'M1 7h12'} strokeWidth="2.2" />
                </Glyph>
              </button>
            </td>
          </tr>
        ))}
      </tbody>
    </table>
  );
}

function ViewModal() {
  return (
    <div
      role="dialog"
      aria-label="视图配置"
      className="relative min-h-full w-[720px] shrink-0 rounded-t-xs bg-white text-sm text-[#333] shadow-[0_4px_16px_rgba(0,0,0,0.3)]"
    >
      <button type="button" aria-label="关闭" className="absolute top-5 right-[21px] text-[#888]">
        <Glyph className="size-3">
          <path d="M1 1l12 12M13 1 1 13" strokeWidth="1.4" />
        </Glyph>
      </button>
      <div className="flex flex-col border-b border-[#ccc] py-6 pr-[30px] pl-[25px]">
        <h2 className="mb-3 leading-[22px] font-bold">视图配置</h2>
        <div className="flex flex-col gap-6">
          <FormRow label="视图名称">
            <TextInput label="视图名称" value="订单统计" className="flex-1" />
          </FormRow>
          <FormRow label="点面统计图例" wide>
            <div className="ml-4">
              <Switch label="点面统计图例" on />
            </div>
          </FormRow>
        </div>
      </div>

      <div className="flex flex-col gap-6 pt-[26px] pr-[30px] pb-6 pl-[25px]">
        <div className="-mb-2 flex items-center justify-between border-b border-[#ededed]">
          <button type="button" className="h-[38px] w-[88px] rounded-xs bg-[#1890ff] font-bold text-white">
            订单类型
          </button>
          <div className="flex items-center gap-2 pr-4">
            <button type="button" className="flex items-center gap-1">
              <Glyph className="size-3.5">
                <path d="M7 0v14M0 7h14" />
              </Glyph>
              添加图例
            </button>
            <WarnIcon />
          </div>
        </div>
        <FormRow label="图例标题">
          <TextInput label="图例标题" value="订单类型" className="w-[433px]" />
          <button type="button" className="ml-2 h-8 w-[88px] rounded-xs bg-[#ff4d4f] font-medium text-white shadow-xs">
            删除图例
          </button>
        </FormRow>
        <FormRow label="数据源">
          <Select label="数据源" value="订单类型" className="mr-2 w-[529px]" />
          <WarnIcon />
        </FormRow>
        <FormRow label="查询引用">
          <Select label="查询引用" value="销售办事处名称" className="mr-2 w-[529px]" />
          <WarnIcon />
        </FormRow>
        <FormRow label="统计指标">
          <Select label="统计指标" value="订单类型" className="mr-2 w-[365px]" />
          <Select label="统计方式" value="计数" className="mr-2 w-[156px]" />
          <WarnIcon />
        </FormRow>
        <div className="flex items-start">
          <span className="w-[100px] shrink-0 leading-8">图例设置：</span>
          <LegendTable />
        </div>
        <FormRow label="图例面板">
          <div className="mr-2 flex gap-4">
            <CheckOption label="指标汇总" checked />
            <CheckOption label="指标占比" checked />
            <CheckOption label="日期筛选" checked />
          </div>
          <Select label="日期字段" value="出库时间" className="mr-2 w-[100px]" />
          <WarnIcon />
        </FormRow>
        <FormRow label="图例眼睛">
          <div className="flex gap-4">
            <RadioOption name="eye" label="默认关闭" checked />
            <RadioOption name="eye" label="默认打开" />
          </div>
        </FormRow>
        <FormRow label="统计钻取">
          <div className="flex gap-4">
            <CheckOption label="第1级" checked />
            <CheckOption label="第2级" checked />
            <CheckOption label="第3级" checked />
            <CheckOption label="第4级" />
          </div>
        </FormRow>
        <FormRow label="统计钻取最后一级" wide>
          <div className="ml-2 flex gap-3">
            <RadioOption name="last" label="显示标签" />
            <RadioOption name="last" label="显示散点" checked />
            <span className="flex items-center gap-2">
              <Switch label="缓冲区" small />
              缓冲区
            </span>
            <span className="ml-1 flex items-center gap-2">
              <Switch label="搜索" small />
              搜索
            </span>
          </div>
        </FormRow>
      </div>
    </div>
  );
}

export default function App() {
  return (
    <div className="relative flex h-screen overflow-hidden font-['Liberation_Sans','Noto_Sans_CJK_SC',sans-serif]">
      <Sidebar />
      <div className="flex min-w-0 flex-1 flex-col">
        <Header />
        <div className="flex min-h-0 flex-1">
          <ViewList />
          <main className="relative min-w-0 flex-1">
            <MapCanvas />
            <button
              type="button"
              aria-label="收起面板"
              className="absolute top-[409px] -left-px flex h-[43px] w-7 items-center justify-start rounded-r-full bg-[#22304a] text-white"
            >
              <ChevronLeft className="size-6 shrink-0" strokeWidth={2.5} />
            </button>
            <LegendPanel />
            <div className="absolute right-[23px] bottom-[23px] flex w-10 flex-col divide-y divide-[#bbb] rounded-xs bg-white text-[#222] shadow-md">
              <button type="button" aria-label="放大" className="flex h-10 items-center justify-center">
                <Glyph className="size-4">
                  <path d="M7 0v14M0 7h14" strokeWidth="1.3" />
                </Glyph>
              </button>
              <button type="button" aria-label="缩小" className="flex h-10 items-center justify-center">
                <Glyph className="size-4">
                  <path d="M0 7h14" strokeWidth="1.3" />
                </Glyph>
              </button>
            </div>
          </main>
        </div>
      </div>

      {/* dimmed layer with the dialog on top */}
      <div className="absolute inset-0 z-20 flex items-start justify-center overflow-hidden bg-black/45 pt-[63px] pr-1">
        <ViewModal />
      </div>

      {/* callout */}
      <div className="pointer-events-none absolute top-[71px] left-[180px] z-30 h-[38px] w-[269px] rounded-sm border-4 border-[#ff3b3b]" />
      <svg viewBox="0 0 134 10" className="pointer-events-none absolute top-[86px] left-[467px] z-30 h-2.5 w-[134px]" fill="#ff3b3b" aria-hidden>
        <path d="M0 6.5 124 3V0l10 5-10 5V8z" />
      </svg>

      <button
        type="button"
        aria-label="收起顶栏"
        className="absolute top-0 right-0 z-30 flex h-[13px] w-[30px] items-center justify-center rounded-bl-sm bg-[#f5f5f5] text-[#8a8a99]"
      >
        <ChevronsUp className="size-4 shrink-0" strokeWidth={1.5} />
      </button>
      <div className="absolute top-[30px] right-0 z-30 h-[801px] w-1 rounded-l-sm bg-[#f5f5f5]" />
    </div>
  );
}
